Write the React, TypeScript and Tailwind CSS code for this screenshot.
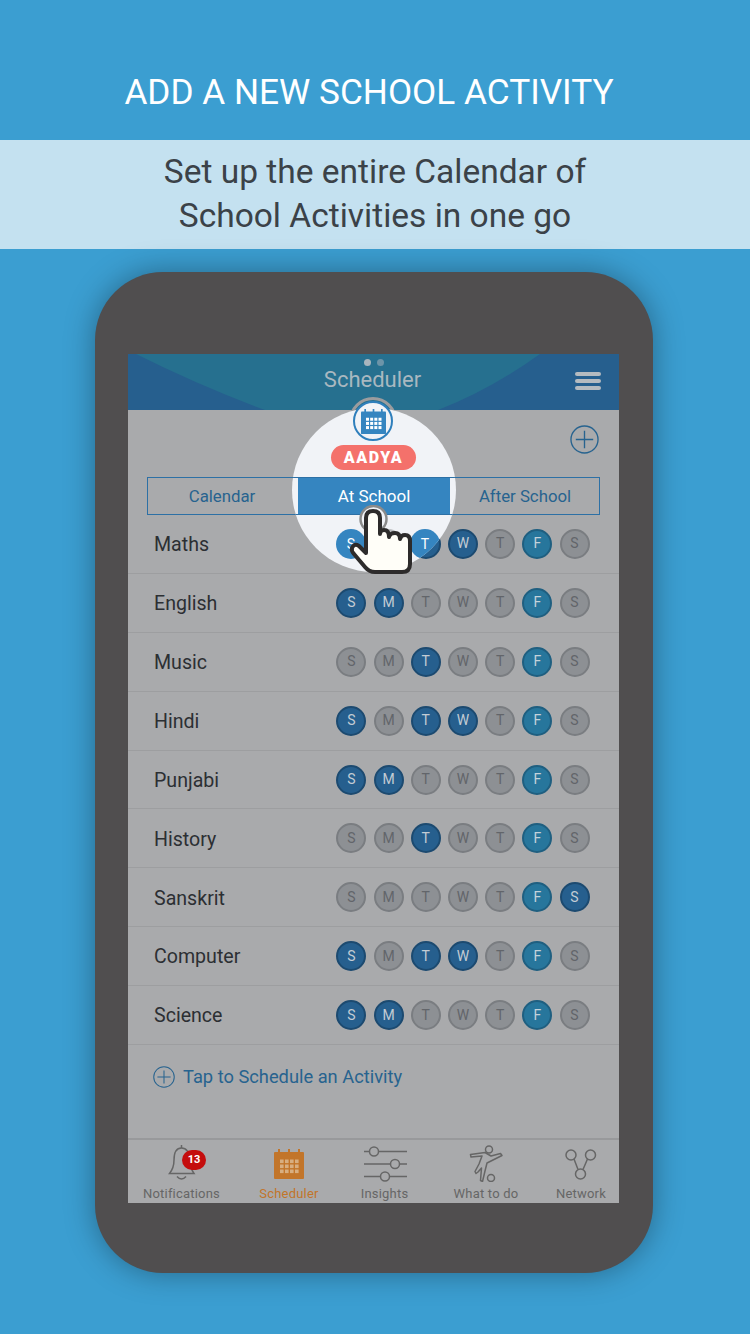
const font = { fontFamily: "Roboto, sans-serif" };

type Subject = { name: string; days: boolean[] };

const letters = ["S", "M", "T", "W", "T", "F", "S"];

const subjects: Subject[] = [
  { name: "Maths", days: [true, false, true, true, false, true, false] },
  { name: "English", days: [true, true, false, false, false, true, false] },
  { name: "Music", days: [false, false, true, false, false, true, false] },
  { name: "Hindi", days: [true, false, true, true, false, true, false] },
  { name: "Punjabi", days: [true, true, false, false, false, true, false] },
  { name: "History", days: [false, false, true, false, false, true, false] },
  { name: "Sanskrit", days: [false, false, false, false, false, true, true] },
  { name: "Computer", days: [true, false, true, true, false, true, false] },
  { name: "Science", days: [true, true, false, false, false, true, false] },
];

const Day = ({ letter, on, friday }: { letter: string; on: boolean; friday: boolean }) => {
  let cls = "bg-[#8d9094] border-[#7a7d81] text-[#62656a]";
  if (on) cls = "bg-[#265f8e] border-[#1c4a70] text-[#c3ccd4]";
  if (on && friday) cls = "bg-[#27769c] border-[#1f5f80] text-[#c3d2da]";
  return (
    <div className={`flex h-[30px] w-[30px] items-center justify-center rounded-full border-2 text-[14px] ${cls}`}>
      {letter}
    </div>
  );
};

const Bell = () => (
  <svg width="28" height="38" viewBox="168 1144 28 38" fill="none" stroke="#666" strokeWidth="1.5">
    <path d="M181.500 1145V1148" />
    <path d="M169.500 1173.500Q174 1168 174 1160Q174 1148 181.500 1148Q189 1148 190 1160Q190 1168 194 1173.500Z" />
    <path d="M177 1176.500Q181.500 1181.500 186 1176.500" />
  </svg>
);

const CalendarIcon = ({ color, dot, size }: { color: string; dot: string; size: number }) => (
  <svg width={size} height={size} viewBox="0 0 30 30">
    <rect x="0" y="3" width="30" height="27" fill={color} rx="1" />
    <path d="M5 0V5M15 0V5M25 0V5" stroke={color} strokeWidth="2" />
    {[10.500, 15.500, 20.500].map((y) =>
      [6, 11, 16, 21].map((x) => <rect key={`${x}-${y}`} x={x} y={y} width="3.600" height="3.600" fill={dot} />)
    )}
  </svg>
);

const Sliders = () => (
  <svg className="ml-[2px]" width="44" height="36" viewBox="364 1146 44 36" fill="none" stroke="#666" strokeWidth="1.500">
    <path d="M364 1151.500H407M364 1164H407M364 1176.500H407" />
    <circle cx="374" cy="1151.500" r="4.500" fill="#a9aaac" />
    <circle cx="395" cy="1164" r="4.500" fill="#a9aaac" />
    <circle cx="385" cy="1176.500" r="4.500" fill="#a9aaac" />
  </svg>
);

const Player = () => (
  <svg width="36" height="37" viewBox="468 1145 36 37" fill="none" stroke="#666" strokeWidth="1.500" strokeLinejoin="round">
    <circle cx="489" cy="1149.500" r="3.500" />
    <circle cx="491" cy="1178" r="3.500" />
    <path d="M470.500 1154.500L485 1152.500L491 1156L500.500 1153.500L502 1155.500L492 1160.500L487 1163L485 1171L482.500 1181.500L480.500 1180.500L481.500 1168L478 1172L476 1173.500L475 1171.500L479 1164L482 1156L471 1157Z" />
  </svg>
);

const Network = () => (
  <svg width="32" height="34" viewBox="565 1148 32 34" fill="none" stroke="#666" strokeWidth="1.500">
    <circle cx="571" cy="1155" r="5" />
    <circle cx="590.500" cy="1155" r="5" />
    <circle cx="580.500" cy="1174" r="5" />
    <path d="M574 1159L578 1169.500M587.500 1159L583 1169.500" />
  </svg>
);

const PlusCircle = ({ size }: { size: number }) => (
  <svg width={size} height={size} viewBox="0 0 30 30" fill="none" stroke="#27638f" strokeWidth="1.400">
    <circle cx="15" cy="15" r="14" />
    <path d="M15 6V24M6 15H24" />
  </svg>
);

const NavItem = ({ label, icon, active }: { label: string; icon: React.ReactNode; active?: boolean }) => (
  <div className="flex flex-col items-center">
    <div className="flex h-[46px] items-end justify-center pb-[4px]">{icon}</div>
    <span className={`text-[13px] leading-[16px] tracking-[0.2px] ${active ? "text-[#c2752a]" : "text-[#666]"}`}>{label}</span>
  </div>
);

// the bright circle over the screen, with the lit-up copies of what it covers
const Spotlight = () => (
  <div className="absolute left-[164px] top-[54px] h-[164px] w-[164px] overflow-hidden rounded-full bg-[#f1f3f7]">
    <div className="absolute left-0 top-[69px] flex h-[38px] w-full border-y border-[#2d70a5]">
      <div className="ml-[6px] flex h-full w-[152px] items-center justify-center bg-[#3585c0] pt-[1px] text-[17px] text-white">
        At School
      </div>
    </div>
    <div className="absolute left-[44px] top-[121px] flex h-[30px] w-[30px] items-center justify-center rounded-full bg-[#3585c0] text-[14px] text-white">
      S
    </div>
    <div className="absolute left-[81px] top-[121px] h-[30px] w-[30px] rounded-full bg-[#b9bbbe]" />
    <div className="absolute left-[118px] top-[121px] flex h-[30px] w-[30px] items-center justify-center rounded-full bg-[#3585c0] text-[14px] text-white">
      T
    </div>
  </div>
);

const HandPointer = () => (
  <svg className="absolute left-[217px] top-[151px]" width="75" height="75" viewBox="345 505 75 75">
    <circle cx="373.500" cy="519" r="13" fill="#f1f3f7" stroke="#8a8a8a" strokeWidth="2.500" />
    <path
      d="M366 553L359 546Q354 543 352 548Q351 551 354 554L365 567Q369 572 375 572L402 572Q410 572 410 564L410 541Q410 535 405 535Q401 535 400 539Q400 533 395 533Q390 533 389 537Q389 530 384 530Q380 530 380 534L380 518Q380 511 373 511Q366 511 366 518Z"
      fill="#fffef8"
      stroke="#2d2b2b"
      strokeWidth="4"
      strokeLinejoin="round"
    />
  </svg>
);

export default function App() {
  return (
    <div className="h-[1334px] w-[750px] overflow-hidden bg-[#3b9ed1]" style={font}>
      <div className="flex h-[140px] items-end justify-center pb-[25px] pr-[12px] text-[35.200px] leading-[46px] text-white">
        ADD A NEW SCHOOL ACTIVITY
      </div>
      <div className="flex h-[109px] flex-col items-center bg-[#c4e1f0] pt-[10px] text-[33.500px] leading-[44px] text-[#3b4248]">
        <span>Set up the entire Calendar of</span>
        <span>School Activities in one go</span>
      </div>

      {/* Phone */}
      <div className="ml-[95px] mt-[23px] h-[1001px] w-[558px] rounded-[68px] bg-[#504e4f] px-[33px] pt-[82px] shadow-[0_0_30px_rgba(0,0,0,0.35)]">
        <div className="relative flex h-[849px] w-[491px] flex-col bg-[#a9aaac]">
          {/* Header */}
          <div className="relative flex h-[56px] items-start justify-center bg-[#265f8e]">
            <svg className="absolute left-0 top-0" width="491" height="56" viewBox="128 354 491 56">
              <path d="M136 354Q200 386 265 410H438Q490 390 540 354Z" fill="#26708f" />
            </svg>
            <div className="absolute left-[236px] top-[5px] flex gap-[6px]">
              <div className="h-[7px] w-[7px] rounded-full bg-[#a9b5bd]" />
              <div className="h-[7px] w-[7px] rounded-full bg-[#6d94a8]" />
            </div>
            <span className="relative -ml-[2px] pt-[1px] text-[22px] leading-[50px] text-[#a9b8c0]">Scheduler</span>
            <div className="absolute right-[18px] top-[18px] flex w-[26px] flex-col gap-[3.500px]">
              <div className="h-[3.500px] rounded-sm bg-[#b5bbc0]" />
              <div className="h-[3.500px] rounded-sm bg-[#b5bbc0]" />
              <div className="h-[3.500px] rounded-sm bg-[#b5bbc0]" />
            </div>
          </div>

          {/* Add button */}
          <div className="flex h-[67px] justify-end pr-[20px] pt-[15px]">
            <PlusCircle size={29} />
          </div>

          {/* Tabs */}
          <div className="mx-[19px] grid h-[38px] grid-cols-[151px_152px_150px] items-center border border-[#2d70a5] pt-[1px] text-center text-[16.800px] text-[#27638f]">
            <span className="-ml-[3px]">Calendar</span>
            <span>At School</span>
            <span className="-ml-[2px]">After School</span>
          </div>

          {/* Subjects */}
          <div className="flex flex-col">
            {subjects.map((subject) => (
              <div key={subject.name} className="flex h-[58.900px] items-center justify-between border-b border-[#9d9ea0] pl-[26px] pr-[29.500px]">
                <span className="pt-[2px] text-[19.600px] text-[#2c2f33]">{subject.name}</span>
                <div className="flex gap-[7.200px]">
                  {subject.days.map((on, i) => (
                    <Day key={i} letter={letters[i]} on={on} friday={i === 5} />
                  ))}
                </div>
              </div>
            ))}
          </div>

          {/* Schedule link */}
          <div className="flex h-[62px] items-center gap-[8px] pl-[25px] pt-[2px] text-[18.300px] text-[#27638f]">
            <PlusCircle size={22} />
            <span>Tap to Schedule an Activity</span>
          </div>

          {/* Bottom nav */}
          <div className="mt-auto grid h-[65px] grid-cols-[107px_108px_83px_120px_70px] border-t-2 border-[#98999b]">
            <div className="relative">
              <NavItem label="Notifications" icon={<Bell />} />
              <div className="absolute left-[54px] top-[10px] flex h-[20px] w-[24px] items-center justify-center rounded-full bg-[#c40d0d] text-[11px] font-bold text-white">
                13
              </div>
            </div>
            <NavItem
              label="Scheduler"
              active
              icon={
                <div className="mb-[3px]">
                  <CalendarIcon color="#c2752a" dot="#d8ae80" size={30} />
                </div>
              }
            />
            <NavItem label="Insights" icon={<Sliders />} />
            <NavItem label="What to do" icon={<Player />} />
            <NavItem label="Network" icon={<Network />} />
          </div>

          {/* Gray ring sticks out above the spotlight */}
          <div className="absolute left-[221px] top-[43px] h-[48px] w-[48px] rounded-full border-[3px] border-[#9b9c9e]" />

          <Spotlight />

          {/* Badge over the spotlight */}
          <div className="absolute left-[225px] top-[47px] flex h-[40px] w-[40px] items-center justify-center rounded-full border-2 border-[#2f7fbc] bg-[#f1f3f7]">
            <CalendarIcon color="#3585c0" dot="#ffffff" size={25} />
          </div>
          <div className="absolute left-[203px] top-[91px] flex h-[25px] w-[85px] items-center justify-center rounded-full bg-[#f4716b] text-[16px] font-black tracking-[1.600px] text-white">
            AADYA
          </div>

          <HandPointer />
        </div>
      </div>
    </div>
  );
}
